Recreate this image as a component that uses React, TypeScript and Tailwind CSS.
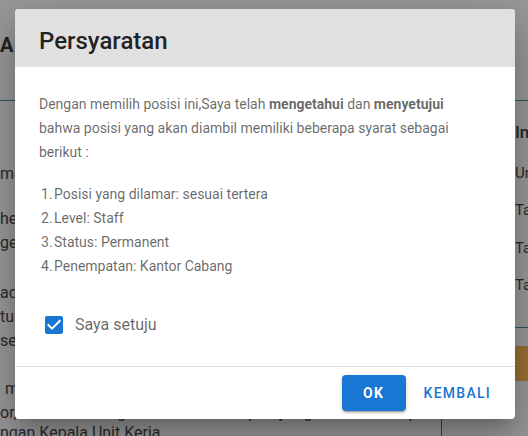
const terms = [
  "Posisi yang dilamar: sesuai tertera",
  "Level: Staff",
  "Status: Permanent",
  "Penempatan: Kantor Cabang",
];

const leftLines = [
  { text: "melengkapi dokumen persyaratan", top: "mt-[61px]" },
  { text: "herwell paham kebijakan", top: "mt-[21px]" },
  { text: "gelar sarjana semua jurusan", top: "" },
  { text: "adalah karyawan aktif", top: "mt-[26px]" },
  { text: "tuk ditempatkan", top: "" },
  { text: "sedia bekerja keras", top: "" },
];

const App = () => {

  return (

    <div className="relative h-[436px] w-[528px] overflow-hidden bg-white font-['Roboto',sans-serif] text-[#333]">

      {/* Page behind the dialog */}

      <div className="flex h-[101px] items-center border-b border-[#2f8a96] pb-[10px]">
        <h1 className="text-[20px] font-bold tracking-wide text-[#222]">
          AIL LOWONGAN PEKERJAAN
        </h1>
      </div>

      <div className="flex">

        <div className="w-[442px] shrink-0 border-r border-[#2f6f7a] text-[16px] leading-[24px]">

          {leftLines.map((line) => (
            <p key={line.text} className={line.top}>
              {line.text}
            </p>
          ))}

          <p className="mt-[24px] pl-[5px]">
            memahami tugas sesuai jabatan
          </p>

          <p className="whitespace-nowrap">
            or, bersedia mengikuti seluruh tahapan yang diminta oleh perusahaan
          </p>

          <p className="-mt-[4px]">
            ngan Kepala Unit Kerja
          </p>

        </div>

        <div className="flex-1 whitespace-nowrap pl-[73px] text-[15px]">

          <p className="mt-[19px] text-[17px] font-medium">Informasi</p>
          <p className="mt-[16px]">Unit</p>
          <p className="mt-[15px]">Tanggal</p>
          <p className="mt-[15px]">Tanggal</p>
          <p className="mt-[15px]">Tanggal</p>

          <div className="-ml-[73px] mt-[30px] border-b border-[#2f8a96]" />

          <div className="-ml-[73px] mt-[18px] h-[35px] bg-[#ffb546]" />

        </div>

      </div>

      {/* Overlay */}

      <div className="absolute inset-0 bg-[rgba(33,33,33,0.46)]" />

      {/* Dialog */}

      <div className="absolute left-[15px] top-[9px] w-[500px] overflow-hidden rounded-[4px] bg-white shadow-[0_11px_15px_-7px_rgba(0,0,0,0.2),0_24px_38px_3px_rgba(0,0,0,0.14),0_9px_46px_8px_rgba(0,0,0,0.12)]">

        <div className="bg-[#e0e0e0] px-6 pb-[10px] pt-4">
          <h2 className="text-[24px] font-medium leading-8 text-[rgba(0,0,0,0.87)]">
            Persyaratan
          </h2>
        </div>

        <div className="px-6 pb-[29px] pt-[25px] text-[14px] leading-6 text-[rgba(0,0,0,0.6)]">

          <p className="pr-[20px]">
            Dengan memilih posisi ini,Saya telah{" "}
            <b className="font-bold">mengetahui</b> dan{" "}
            <b className="font-bold">menyetujui</b> bahwa posisi yang akan
            diambil memiliki beberapa syarat sebagai berikut :
          </p>

          <ol className="mt-[18px] pl-[2px]">
            {terms.map((term, index) => (
              <li key={term} className="flex">
                <span className="w-[13px] shrink-0">{index + 1}.</span>
                <span>{term}</span>
              </li>
            ))}
          </ol>

          {/* Agreement */}

          <label className="mt-[35px] flex items-center">
            <span className="ml-[3px]">
              <svg viewBox="0 0 24 24" className="h-6 w-6 fill-[#1976d2]">
                <path d="M10,17L5,12L6.41,10.58L10,14.17L17.59,6.58L19,8M19,3H5C3.89,3 3,3.89 3,5V19A2,2 0 0,0 5,21H19A2,2 0 0,0 21,19V5C21,3.89 20.1,3 19,3Z" />
              </svg>
            </span>
            <span className="ml-[9px] text-[16px] text-[rgba(0,0,0,0.6)]">
              Saya setuju
            </span>
          </label>

        </div>

        <div className="border-t border-[rgba(0,0,0,0.12)]" />

        {/* Actions */}

        <div className="flex justify-end gap-[2px] p-2">

          <button
            type="button"
            className="h-9 w-16 rounded-[4px] bg-[#1976d2] text-[14px] font-bold tracking-[0.09em] text-white shadow-[0_3px_1px_-2px_rgba(0,0,0,0.2),0_2px_2px_0_rgba(0,0,0,0.14),0_1px_5px_0_rgba(0,0,0,0.12)]"
          >
            OK
          </button>

          <button
            type="button"
            className="h-9 rounded-[4px] px-4 text-[14px] font-medium tracking-[0.09em] text-[#1976d2]"
          >
            KEMBALI
          </button>

        </div>

      </div>

    </div>

  );

};

export default App;
